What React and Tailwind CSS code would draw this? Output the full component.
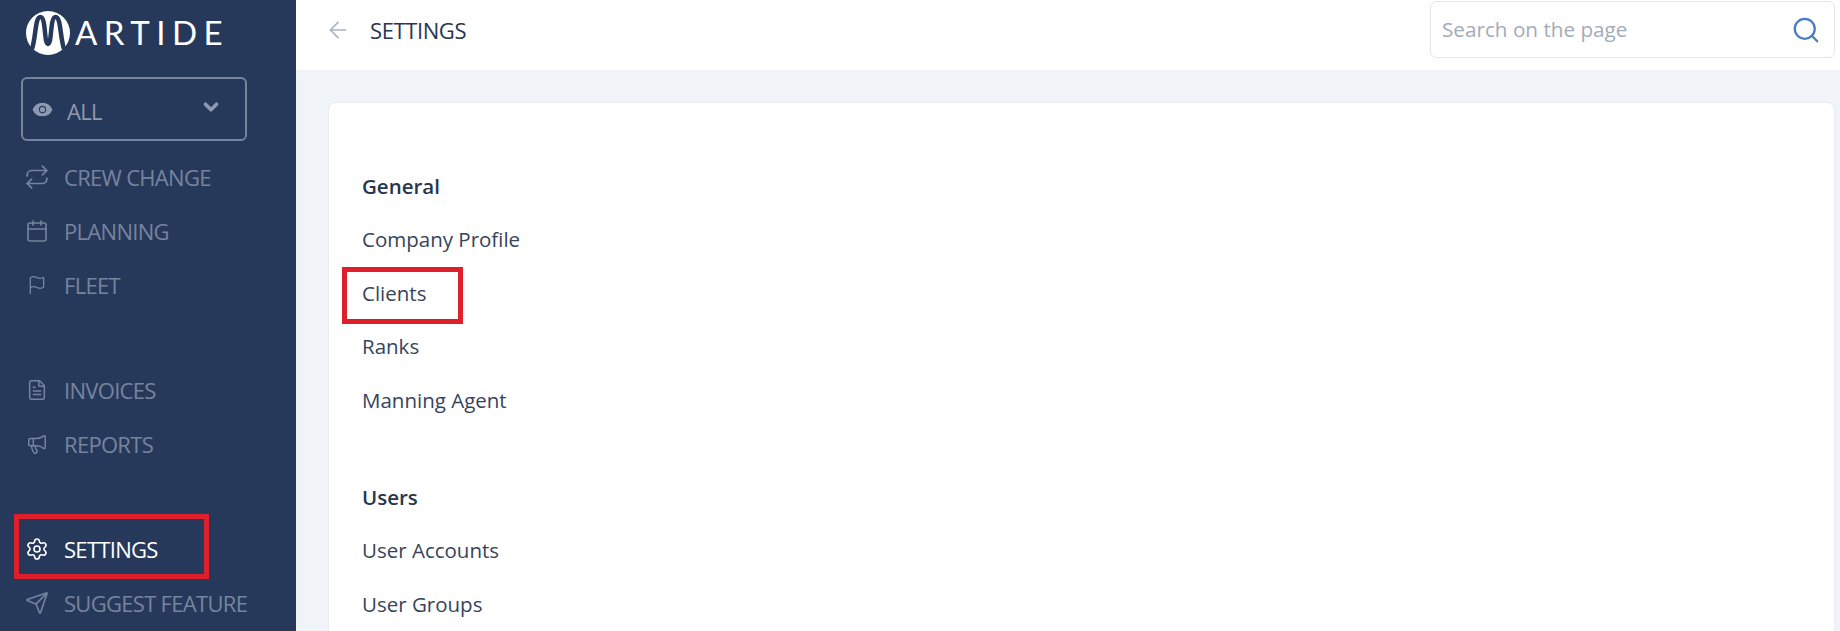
import React from 'react';
import { ArrowLeft, Calendar, ChevronDown, Eye, FileText, Flag, Megaphone, Repeat, Search, Send, Settings } from 'lucide-react';

const FONT = 'font-["Open_Sans",sans-serif]';

const NavItem = ({ icon: Icon, label, active, size = 24 }) => (
  <div className={`flex h-[54px] items-center pl-[25px] ${active ? 'text-white' : 'text-[#76849f]'}`}>
    <div className="flex w-[24px] justify-center">
      <Icon size={size} strokeWidth={1.6} className="shrink-0" />
    </div>
    <span className="ml-[15px] text-[22px] tracking-[-0.7px]">{label}</span>
  </div>
);

const Logo = () => (
  <div className="flex h-[65px] items-center pl-[26px]">
    <svg width="44" height="44" viewBox="0 0 44 44">
      <circle cx="22" cy="22" r="22" fill="#fff" />
      <path d="M6 38 C10 26 9 6 14.5 6 C20 6 18 33 22 33 C26 33 24 6 29.5 6 C35 6 34 26 38 38" fill="none" stroke="#27395a" strokeWidth="4.5" />
    </svg>
    <span className="ml-[5px] font-['Lato',sans-serif] text-[33px] leading-none tracking-[6.5px] text-white">ARTIDE</span>
  </div>
);

const Section = ({ title, items }) => (
  <div className="mb-[43px]">
    <div className="flex h-[54px] items-center text-[20.5px] font-semibold text-[#27364f]">{title}</div>
    {items.map((item) => (
      <div key={item} className="flex h-[53.5px] items-center text-[20.5px] text-[#36445c]">{item}</div>
    ))}
  </div>
);

export default function App() {
  return (
    <div className={`relative flex h-[631px] w-[1840px] overflow-hidden bg-[#f0f3f8] ${FONT}`}>
      <aside className="w-[296px] shrink-0 bg-[#27395a]">
        <Logo />
        <div className="mx-[21px] mt-[12px] flex h-[64px] w-[226px] items-center rounded-[6px] border-2 border-[#76849f] pl-[7px] pr-[23px] text-[#8d99b0]">
          <Eye size={25} fill="currentColor" stroke="#27395a" strokeWidth={1} />
          <span className="ml-[12px] mt-[4px] text-[22px] tracking-[-0.7px]">ALL</span>
          <ChevronDown size={22} strokeWidth={4} className="mb-[4px] ml-auto" />
        </div>
        <div className="mt-[9px]">
          <NavItem icon={Repeat} label="CREW CHANGE" size={26} />
          <NavItem icon={Calendar} label="PLANNING" />
          <NavItem icon={Flag} label="FLEET" size={20} />
        </div>
        <div className="mt-[51px]">
          <NavItem icon={FileText} label="INVOICES" size={22} />
          <NavItem icon={Megaphone} label="REPORTS" size={22} />
        </div>
        <div className="mt-[51px]">
          <NavItem icon={Settings} label="SETTINGS" active />
          <NavItem icon={Send} label="SUGGEST FEATURE" />
        </div>
      </aside>

      <main className="min-w-0 flex-1">
        <header className="flex h-[70px] items-start justify-between bg-white pl-[29px] pr-[5px] pt-[1px]">
          <div className="flex h-[58px] items-center text-[#27364f]">
            <ArrowLeft size={26} strokeWidth={1.5} className="text-[#a9b2c2]" />
            <span className="ml-[19px] text-[22px] font-medium tracking-[-0.4px]">SETTINGS</span>
          </div>
          <div className="flex h-[57px] w-[405px] items-center justify-between rounded-[6px] border border-[#e3e6ec] pl-[11px] pr-[13px]">
            <span className="text-[20.7px] text-[#a3abb8]">Search on the page</span>
            <Search size={30} strokeWidth={1.8} className="text-[#4a7cc4]" />
          </div>
        </header>
        <div className="ml-[32px] mr-[5px] mt-[32px] h-[600px] rounded-[8px] border border-[#e9ecf2] bg-white pl-[33px] pt-[56px]">
          <Section title="General" items={['Company Profile', 'Clients', 'Ranks', 'Manning Agent']} />
          <Section title="Users" items={['User Accounts', 'User Groups']} />
        </div>
      </main>

      <div className="absolute left-[14px] top-[514px] h-[65px] w-[195px] border-[5px] border-[#de1f2c]" />
      <div className="absolute left-[342px] top-[267px] h-[57px] w-[121px] border-[5px] border-[#de1f2c]" />
    </div>
  );
}
